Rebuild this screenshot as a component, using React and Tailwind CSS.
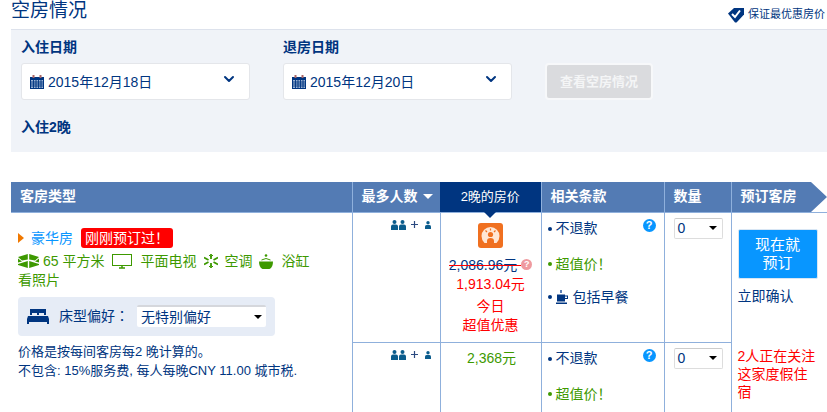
import React from 'react';
import { ChevronDown } from 'lucide-react';

const CalendarIcon = () => (
  <svg width="14" height="14" viewBox="0 0 14 14" className="shrink-0">
    <rect x="0" y="2" width="14" height="12" fill="#003580" />
    <rect x="2.5" y="0" width="2" height="3" fill="#a66" />
    <rect x="9.5" y="0" width="2" height="3" fill="#a66" />
    <rect x="1" y="5" width="12" height="8" fill="#9db4d6" />
    <path d="M1 7h12M1 9h12M1 11h12M3.5 5v8M6 5v8M8.5 5v8M11 5v8" stroke="#003580" strokeWidth="0.9" />
  </svg>
);

const TagIcon = () => (
  <svg width="16" height="16" viewBox="0 0 16 16">
    <path d="M0 6.500 6 1h10v6.500L8.500 15.500H7z" fill="#003580" />
    <path d="M4 7 7 10 12 3.500" fill="none" stroke="#fff" strokeWidth="2" />
  </svg>
);

const People = () => (
  <span className="flex items-center text-[#003580]">
    <svg width="15" height="10" viewBox="0 0 15 10">
      <circle cx="3.500" cy="2" r="2" fill="#0b5c8c" />
      <circle cx="11.500" cy="2" r="2" fill="#0b5c8c" />
      <path d="M0 10V6.500q0-2 2-2h3q2 0 2 2V10zM8 10V6.500q0-2 2-2h3q2 0 2 2V10z" fill="#0b5c8c" />
    </svg>
    <svg width="7" height="7" viewBox="0 0 7 7" className="ml-[5px]">
      <path d="M3.500 0v7M0 3.500h7" stroke="#2a4a80" strokeWidth="1.200" />
    </svg>
    <svg width="6" height="8" viewBox="0 0 6 8" className="ml-[7px]">
      <circle cx="3" cy="1.800" r="1.700" fill="#0b5c8c" />
      <path d="M0 8V5.500q0-1.500 1.500-1.500h3q1.500 0 1.500 1.500V8z" fill="#0b5c8c" />
    </svg>
  </span>
);

const DealBadge = () => (
  <div className="w-[25px] h-[25px] rounded-[3px] bg-[#f07020] flex items-center justify-center">
    <svg width="19" height="17" viewBox="0 0 19 17">
      <path d="M9.500 0a9 9 0 0 1 9 9q0 4-3 7h-2.500v-2q0-3-3.500-3t-3.500 3v2h-2.500q-3-3-3-7a9 9 0 0 1 9-9z" fill="#ffe6d4" />
      <circle cx="9.500" cy="7.500" r="2.600" fill="#f07020" />
      <path d="M9.500 1.500v2M4.500 3.500l1.500 1.500M14.500 3.500 13 5" stroke="#f07020" strokeWidth="1.200" />
    </svg>
  </div>
);

const AreaIcon = () => (
  <svg width="21" height="14" viewBox="0 0 21 14">
    <path d="M0 3 9.800 0v5.500L4 6.500zM21 3 11.200 0v5.500l5.800 1zM0 4.500l4 3-4 1zM21 4.500l-4 3 4 1z" fill="#3d9900" />
    <path d="M0 10l9.800-3v7L0 11zM21 10l-9.800-3v7L21 11z" fill="#3d9900" />
  </svg>
);

const FanIcon = () => (
  <svg width="14" height="14" viewBox="0 0 14 14">
    <path d="M7 0v5M7 9v5M0 3.500 4.500 6M9.500 8 14 10.500M0 10.500 4.500 8M9.500 6 14 3.500" stroke="#3d9900" strokeWidth="1.800" />
    <path d="M5 1l2 2 2-2M5 13l2-2 2 2" fill="none" stroke="#3d9900" />
  </svg>
);

const BathIcon = () => (
  <svg width="14" height="15" viewBox="0 0 14 15">
    <path d="M0 7.500h14q0 6-3.500 7.500h-7Q0 13.500 0 7.500z" fill="#3d9900" />
    <path d="M2.500 6q4.500-3 9 0" fill="none" stroke="#3d9900" />
    <circle cx="7" cy="1.500" r="1.300" fill="#3d9900" />
  </svg>
);

const CupIcon = () => (
  <svg width="13" height="14" viewBox="0 0 13 14">
    <path d="M1 4.500h8v7H1zM9 5.500h3v3.500H9v-1h2V6.500H9z" fill="#003580" />
    <path d="M0 12.500h11V14H0z" fill="#003580" />
    <path d="M4 0h2v3H4z" fill="#5b7fb5" />
  </svg>
);

const Help = () => (
  <span className="w-[13px] h-[13px] mb-[6px] rounded-full bg-[#0896ff] text-white text-[11px] leading-[13px] font-bold text-center font-['Liberation_Sans']">?</span>
);

const Bullet = ({ green, children }) => (
  <div className={`flex items-center gap-[4px] ${green ? 'text-[#3d9900]' : 'text-[#003580]'}`}>
    <span className={`w-[4px] h-[4px] rounded-full ${green ? 'bg-[#3d9900]' : 'bg-[#003580]'}`}></span>
    {children}
  </div>
);

const Qty = () => (
  <div className="w-[49px] h-[21px] mt-[5px] ml-[9px] bg-white border border-[#ddd] border-t-[#ccc] rounded-[2px] flex items-center justify-between pl-[3px] pr-[5px] text-[14px] text-[#003580]">
    0
    <span className="w-0 h-0 border-x-[4px] border-x-transparent border-t-[4px] border-t-black"></span>
  </div>
);

const DateBox = ({ value }) => (
  <div className="w-[229px] h-[37px] bg-white border border-[#e4e6ea] rounded-[3px] flex items-center pl-[8px] pr-[12px]">
    <CalendarIcon />
    <span className="ml-[4px] pt-[2px] text-[14px] text-[#003580]">{value}</span>
    <ChevronDown size={16} strokeWidth={3} className="ml-auto mb-[6px] text-[#003580]" />
  </div>
);

export default function App() {
  return (
    <div className="w-[827px] h-[412px] overflow-hidden bg-white font-['Liberation_Sans','Noto_Sans_CJK_SC',sans-serif]">
      {/* Title */}
      <div className="h-[29px] pl-[11px] flex justify-between">
        <h2 className="text-[19px] leading-[21px] text-[#003580]">空房情况</h2>
        <div className="flex items-center gap-[4px] h-[29px] pr-[2px] text-[11px] text-[#003580]">
          <TagIcon />
          保证最优惠房价
        </div>
      </div>

      {/* Search box */}
      <div className="ml-[11px] h-[123px] bg-[#f0f3f8] border-t border-[#dde2ec] px-[10px] pt-[8px]">
        <div className="flex">
          <div>
            <div className="text-[14px] leading-[19px] font-bold text-[#003580] mb-[6px]">入住日期</div>
            <DateBox value="2015年12月18日" />
          </div>
          <div className="ml-[33px]">
            <div className="text-[14px] leading-[19px] font-bold text-[#003580] mb-[6px]">退房日期</div>
            <DateBox value="2015年12月20日" />
          </div>
          <button className="ml-[33px] mt-[25px] w-[108px] h-[37px] bg-[#dadbde] border-2 border-[#f7f8fa] rounded-[4px] text-[13px] font-bold text-[#f4f5f6]">
            查看空房情况
          </button>
        </div>
        <div className="mt-[18px] text-[14px] leading-[19px] font-bold text-[#003580]">入住2晚</div>
      </div>

      {/* Rooms table */}
      <table className="ml-[11px] mt-[30px] w-[816px] table-fixed border-collapse text-[14px]">
        <colgroup>
          <col className="w-[341px]" />
          <col className="w-[88px]" />
          <col className="w-[101px]" />
          <col className="w-[123px]" />
          <col className="w-[67px]" />
          <col className="w-[96px]" />
        </colgroup>
        <thead>
          <tr className="h-[30px] bg-[#537bb4] text-white text-left border-b border-[#8fb0dc]">
            <th className="pl-[9px] font-bold">客房类型</th>
            <th className="pl-[9px] border-l border-[#8fb0dc] font-bold">
              <span className="flex items-center gap-[5px]">
                最多人数
                <span className="w-0 h-0 border-x-[5px] border-x-transparent border-t-[5px] border-t-white"></span>
              </span>
            </th>
            <th className="relative bg-[#003580] text-center text-[13px] font-normal">
              2晚的房价
              <span className="absolute left-1/2 -translate-x-1/2 top-full w-0 h-0 border-x-[6px] border-x-transparent border-t-[6px] border-t-[#003580]"></span>
            </th>
            <th className="pl-[9px] border-l border-[#8fb0dc] font-bold">相关条款</th>
            <th className="pl-[9px] border-l border-[#8fb0dc] font-bold">数量</th>
            <th className="relative pl-[9px] border-l border-[#8fb0dc] font-bold">
              预订客房
              <svg width="16" height="30" viewBox="0 0 16 30" className="absolute right-0 top-0">
                <path d="M0 0h16v15zM0 30h16V15z" fill="#fff" />
              </svg>
            </th>
          </tr>
        </thead>
        <tbody className="align-top">
          <tr className="h-[130px]">
            <td rowSpan={2} className="pl-[7px] pt-[15px]">
              <div className="flex items-center h-[21px]">
                <span className="w-0 h-0 border-y-[5px] border-y-transparent border-l-[6px] border-l-[#f07800]"></span>
                <span className="ml-[7px] text-[#0896ff]">豪华房</span>
                <span className="ml-[8px] h-[20px] px-[4px] rounded-[3px] bg-[#ff0000] text-white leading-[20px]">刚刚预订过！</span>
              </div>
              <div className="mt-[3px] flex items-center h-[19px] text-[#3d9900]">
                <AreaIcon />
                <span className="ml-[4px]">65 平方米</span>
                <svg width="20" height="15" viewBox="0 0 20 15" className="ml-[8px]">
                  <rect x="0.500" y="0.500" width="19" height="11" fill="none" stroke="#3d9900" />
                  <path d="M7 14h6M10 12v2" stroke="#3d9900" strokeWidth="1.500" />
                </svg>
                <span className="ml-[8px]">平面电视</span>
                <span className="ml-[8px] flex"><FanIcon /></span>
                <span className="ml-[6px]">空调</span>
                <span className="ml-[7px] flex"><BathIcon /></span>
                <span className="ml-[8px]">浴缸</span>
              </div>
              <div className="leading-[18px] text-[#3d9900]">看照片</div>

              <div className="mt-[8px] w-[257px] h-[39px] rounded-[4px] bg-[#e6ecf6] flex items-center pl-[9px]">
                <svg width="22" height="16" viewBox="0 0 22 16">
                  <path d="M3 1h16v6h-2V5H12v2h-2V5H5v2H3zM1 8h20l1 3v5h-2v-2H2v2H0v-5z" fill="#003580" />
                </svg>
                <span className="ml-[10px] text-[#003580]">床型偏好<span className="font-['Noto_Sans_CJK_TC']">：</span></span>
                <div className="ml-[8px] w-[129px] h-[22px] bg-white border-t-2 border-[#d5d7dc] rounded-[2px] flex items-center justify-between pl-[4px] pr-[4px] text-[#003580]">
                  无特别偏好
                  <span className="w-0 h-0 border-x-[4px] border-x-transparent border-t-[4px] border-t-black"></span>
                </div>
              </div>

              <div className="mt-[6px] text-[13px] leading-[19px] text-[#003580]">
                价格是按每间客房每2 晚计算的。<br />
                不包含: 15%服务费, 每人每晚CNY 11.00 城市税.
              </div>
            </td>
            <td className="border-x border-b border-[#8fb0dc] pt-[7px]">
              <div className="flex justify-end pr-[9px]"><People /></div>
            </td>
            <td className="border-b border-[#8fb0dc] text-center">
              <div className="flex flex-col items-center pt-[10px]">
                <DealBadge />
                <div className="mt-[7px] flex items-center justify-center leading-[20px]">
                  <span className="relative text-[#003580]">
                    2,086.96元
                    <span className="absolute left-0 right-[-4px] top-[10px] h-px bg-[#ff0000]"></span>
                  </span>
                  <span className="ml-[4px] w-[11px] h-[11px] rounded-full bg-[#ef9a9f] text-white text-[9px] leading-[11px] font-bold">?</span>
                </div>
                <div className="text-[#ff0000] leading-[18px]">1,913.04元</div>
                <div className="mt-[4px] text-[#ff0000] leading-[19px]">今日<br />超值优惠</div>
              </div>
            </td>
            <td className="border-x border-b border-[#8fb0dc] pl-[6px] pr-[8px] pt-[7px]">
              <div className="flex items-center justify-between h-[18px]">
                <Bullet>不退款</Bullet>
                <Help />
              </div>
              <div className="mt-[16px] h-[18px]"><Bullet green>超值价！</Bullet></div>
              <div className="mt-[15px] h-[18px]">
                <Bullet>
                  <CupIcon />
                  包括早餐
                </Bullet>
              </div>
            </td>
            <td className="border-x border-b border-[#8fb0dc]"><Qty /></td>
            <td rowSpan={2} className="border-l border-[#8fb0dc] pl-[6px]">
              <button className="mt-[16px] w-[80px] h-[50px] bg-[#0896ff] border border-[#d8e6f4] rounded-[2px] text-white text-[15px] leading-[18px]">
                现在就<br />预订
              </button>
              <div className="mt-[8px] leading-[18px] text-[#003580]">立即确认</div>
              <div className="mt-[42px] w-[80px] leading-[18px] text-[#ff0000]">2人正在关注这家度假住宿</div>
            </td>
          </tr>
          <tr className="h-[70px]">
            <td className="border-x border-[#8fb0dc] pt-[7px]">
              <div className="flex justify-end pr-[9px]"><People /></div>
            </td>
            <td className="text-center pt-[5px] pl-[2px] text-[#3d9900]">2,368元</td>
            <td className="border-x border-[#8fb0dc] pl-[6px] pr-[8px] pt-[7px]">
              <div className="flex items-center justify-between h-[18px]">
                <Bullet>不退款</Bullet>
                <Help />
              </div>
              <div className="mt-[16px] h-[18px]"><Bullet green>超值价！</Bullet></div>
            </td>
            <td className="border-x border-[#8fb0dc]"><Qty /></td>
          </tr>
        </tbody>
      </table>
    </div>
  );
}
